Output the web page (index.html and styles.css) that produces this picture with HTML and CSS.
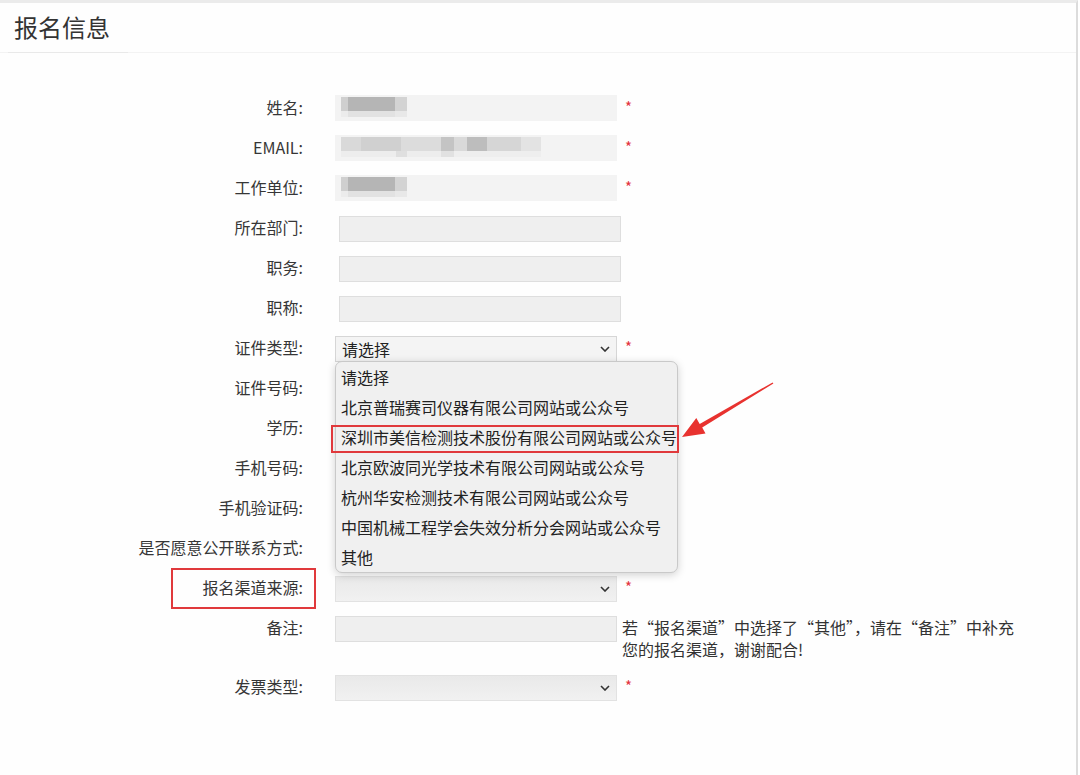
FILE: index.html
```html
<!DOCTYPE html>
<html lang="zh-CN">
<head>
<meta charset="utf-8">
<title>报名信息</title>
<link rel="stylesheet" href="styles.css">
</head>
<body>
<div class="page">
  <div class="head"><h1 class="title">报名信息</h1></div>
  <div class="form">
    <div class="row"><span class="label">姓名:</span><div class="field plain"><div class="blur blur-short"></div></div><span class="req">*</span></div>
    <div class="row"><span class="label">EMAIL:</span><div class="field plain"><div class="blur blur-long"></div></div><span class="req">*</span></div>
    <div class="row"><span class="label">工作单位:</span><div class="field plain"><div class="blur blur-short"></div></div><span class="req">*</span></div>
    <div class="row"><span class="label">所在部门:</span><div class="field input"></div></div>
    <div class="row"><span class="label">职务:</span><div class="field input"></div></div>
    <div class="row"><span class="label">职称:</span><div class="field input"></div></div>
    <div class="row"><span class="label">证件类型:</span><div class="field select light"><span class="sel-text">请选择</span><svg class="chev" viewBox="0 0 10 6" width="10" height="6"><path d="M1 1 L5 5 L9 1" fill="none" stroke="#333" stroke-width="1.6"/></svg></div><span class="req">*</span></div>
    <div class="row"><span class="label">证件号码:</span><div class="field input"></div></div>
    <div class="row"><span class="label">学历:</span><div class="field select"></div></div>
    <div class="row"><span class="label">手机号码:</span><div class="field input"></div></div>
    <div class="row"><span class="label">手机验证码:</span><div class="field input"></div></div>
    <div class="row"><span class="label">是否愿意公开联系方式:</span><div class="field select"></div></div>
    <div class="row"><span class="label">报名渠道来源:</span><div class="field select gray"><span class="sel-text"></span><svg class="chev" viewBox="0 0 10 6" width="10" height="6"><path d="M1 1 L5 5 L9 1" fill="none" stroke="#333" stroke-width="1.6"/></svg></div><span class="req">*</span><span class="mark-label"></span></div>
    <div class="row"><span class="label">备注:</span><div class="field input wide"></div><div class="helper">若“报名渠道”中选择了“其他”，请在“备注”中补充<br>您的报名渠道，谢谢配合!</div></div>
    <div class="row"><span class="label">发票类型:</span><div class="field select gray"><span class="sel-text"></span><svg class="chev" viewBox="0 0 10 6" width="10" height="6"><path d="M1 1 L5 5 L9 1" fill="none" stroke="#333" stroke-width="1.6"/></svg></div><span class="req">*</span></div>
  </div>

  <div class="dropdown">
    <div class="opt">请选择</div>
    <div class="opt">北京普瑞赛司仪器有限公司网站或公众号</div>
    <div class="opt">深圳市美信检测技术股份有限公司网站或公众号</div>
    <div class="opt">北京欧波同光学技术有限公司网站或公众号</div>
    <div class="opt">杭州华安检测技术有限公司网站或公众号</div>
    <div class="opt">中国机械工程学会失效分析分会网站或公众号</div>
    <div class="opt">其他</div>
  </div>
  <div class="mark-option"></div>
  <svg class="arrow" width="110" height="70" viewBox="670 375 110 70">
    <polygon points="682,437 705.5,433.5 702.2,427.6 773.4,383.5 772.6,382.4 699.7,423.9 696.3,418.1" fill="#e8322f"/>
  </svg>
</div>
</body>
</html>
```
FILE: styles.css
```css
* { box-sizing: border-box; }
html, body { margin: 0; padding: 0; background: #fff; }
body {
  font-family: "Noto Sans CJK SC", "Noto Sans", sans-serif;
  color: #333;
  width: 1080px;
  height: 775px;
  overflow: hidden;
}
.page {
  position: relative;
  width: 1078px;
  height: 775px;
  border-top: 3px solid #ebebeb;
  border-right: 2px solid #dcdcdc;
  background: #fefefe;
}
.head {
  height: 50px;
  border-bottom: 1px solid #f3f3f3;
  padding-left: 14px;
  position: relative;
}
.head::after {
  content: "";
  position: absolute;
  left: 8px;
  bottom: -1px;
  width: 120px;
  height: 1px;
  background: #e9e9e9;
}
.title {
  margin: 0;
  padding-top: 8px;
  font-size: 24px;
  line-height: 32px;
  font-weight: normal;
  color: #333;
}
.form {
  padding-top: 34px;
}
.row {
  position: relative;
  display: grid;
  grid-template-columns: 303px 282px auto;
  column-gap: 32px;
  align-items: start;
  min-height: 40px;
}
.label {
  text-align: right;
  font-size: 16px;
  line-height: 40px;
  color: #363636;
  white-space: nowrap;
}
.field {
  height: 26px;
  margin-top: 9px;
  background: #f0f0f0;
  display: flex;
  align-items: center;
}
.field.plain {
  background: #f3f3f3;
  margin-top: 8px;
}
.field.input {
  margin-left: 4px;
  width: 282px;
  border: 1px solid #dedede;
  background: #efefef;
}
.field.input.wide {
  margin-left: 0;
}
.field.select {
  border: 1px solid #e2e2e2;
  background: #efefef;
  justify-content: space-between;
  padding: 0 6px;
}
.field.select.light {
  background: #f4f4f4;
  border-color: #d6d6d6;
}
.field.select.gray {
  background: linear-gradient(#e9e9e9, #f1f1f1);
}
.sel-text {
  font-size: 16px;
  line-height: 26px;
  color: #222;
}
.chev {
  display: block;
}
.req {
  color: #e3333d;
  font-size: 15px;
  line-height: 20px;
  margin-top: 10px;
  margin-left: -24px;
}
.helper {
  margin-left: -27px;
  padding-top: 9px;
  padding-bottom: 6px;
  font-size: 16px;
  line-height: 22px;
  color: #333;
  white-space: nowrap;
}
.blur {
  margin-left: 6px;
  margin-top: -2px;
  height: 20px;
}
.blur-short {
  width: 66px;
  background:
    linear-gradient(to right, #cfcfcf 0 7px, #b5b5b5 7px 54px, #d3d3d3 54px 66px) top / 100% 14px no-repeat,
    linear-gradient(to right, #ececec 0 7px, #e2e2e2 7px 54px, #e8e8e8 54px 66px) bottom / 100% 6px no-repeat;
}
.blur-long {
  width: 200px;
  background:
    linear-gradient(to right, #d9d9d9 0 20px, #d0d0d0 20px 60px, #dcdcdc 60px 100px, #c4c4c4 100px 113px, #d9d9d9 113px 126px, #bdbdbd 126px 146px, #d6d6d6 146px 180px, #e3e3e3 180px 200px) top / 100% 14px no-repeat,
    linear-gradient(to right, #ededed 0 55px, #dfdfdf 55px 66px, #ededed 66px 100px, #e1e1e1 100px 113px, #eeeeee 113px 200px) bottom / 100% 6px no-repeat;
}
.mark-label {
  position: absolute;
  left: 171px;
  top: 1px;
  width: 145px;
  height: 41px;
  border: 2px solid #e0393c;
}
.dropdown {
  position: absolute;
  left: 335px;
  top: 358px;
  width: 343px;
  height: 212px;
  background: #f0f0f0;
  border: 1px solid #c9c9c9;
  border-radius: 7px;
  box-shadow: 0 2px 8px rgba(0, 0, 0, 0.18);
}
.opt {
  height: 30px;
  line-height: 30px;
  padding-left: 5px;
  font-size: 16px;
  color: #222;
  white-space: nowrap;
}
.mark-option {
  position: absolute;
  left: 331px;
  top: 422px;
  width: 348px;
  height: 28px;
  border: 2px solid #e0393c;
}
.arrow {
  position: absolute;
  left: 670px;
  top: 372px;
}
```
